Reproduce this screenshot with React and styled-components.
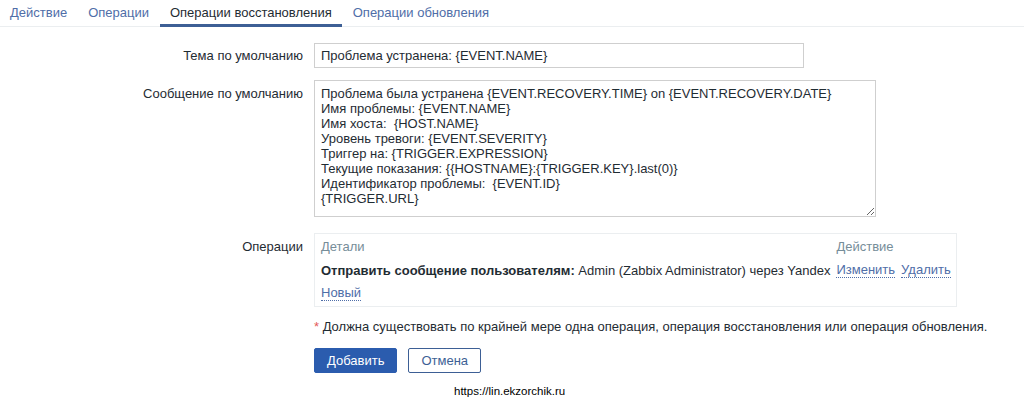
import React, { useState } from "react";
import styled, { createGlobalStyle } from "styled-components";

const GlobalStyle = createGlobalStyle`
  body {
    margin: 0;
    background: #ffffff;
    font-family: "Liberation Sans", Arial, sans-serif;
    font-size: 13px;
    color: #1f2c33;
  }
`;

const Page = styled.div`
  width: 1024px;
  height: 399px;
  overflow: hidden;
`;

const TabBar = styled.nav`
  display: flex;
  height: 26px;
  border-bottom: 1px solid #ebeef0;
`;

const Tab = styled.a`
  display: flex;
  align-items: center;
  padding: 0 10px;
  height: 24px;
  margin-bottom: -1px;
  color: ${(p) => (p.$active ? "#1f2c33" : "#4f6ea8")};
  border-bottom: 3px solid ${(p) => (p.$active ? "#3d5f95" : "transparent")};
  text-decoration: none;
  cursor: pointer;
  & + & {
    margin-left: 1px;
  }
`;

const Form = styled.div`
  display: grid;
  grid-template-columns: 303px 642px;
  column-gap: 11px;
  row-gap: 12px;
  padding-top: 16px;
`;

const Label = styled.label`
  text-align: right;
  padding-top: ${(p) => p.$top || 6}px;
  color: #1f2c33;
`;

const TextInput = styled.input`
  box-sizing: border-box;
  width: 490px;
  height: 25px;
  border: 1px solid #cfcfcf;
  padding: 0 6px;
  font: inherit;
  color: #1f2c33;
  outline: none;
`;

const TextArea = styled.textarea`
  box-sizing: border-box;
  display: block;
  width: 562px;
  height: 137px;
  border: 1px solid #cfcfcf;
  padding: 5px 6px;
  font: inherit;
  line-height: 15px;
  color: #1f2c33;
  outline: none;
  resize: both;
`;

const OpsBox = styled.div`
  box-sizing: border-box;
  width: 643px;
  height: 74px;
  margin-top: 4px;
  border: 1px solid #ebeef0;
  padding: 5px 6px 0 6px;
`;

const OpsTable = styled.div`
  display: grid;
  grid-template-columns: 1fr auto;
  column-gap: 6px;
  row-gap: 9px;
`;

const HeadCell = styled.div`
  color: #768d99;
`;

const Cell = styled.div`
  white-space: nowrap;
`;

const Actions = styled.div`
  display: flex;
  gap: 6px;
`;

const Link = styled.a`
  color: #4f6ea8;
  text-decoration: none;
  border-bottom: 1px dotted #4f6ea8;
  cursor: pointer;
  line-height: 14px;
`;

const NewLink = styled(Link)`
  display: inline-block;
  margin-top: 8px;
`;

const Note = styled.div`
  grid-column: 2;
  line-height: 15px;
  color: #1f2c33;
  white-space: nowrap;
`;

const Star = styled.span`
  color: #e45959;
`;

const ButtonRow = styled.div`
  grid-column: 2;
  display: flex;
  gap: 11px;
  margin-top: 2px;
`;

const Button = styled.button`
  box-sizing: border-box;
  height: 25px;
  padding: 0 ${(p) => (p.$primary ? 12 : 12)}px;
  font: inherit;
  border-radius: 2px;
  border: 1px solid ${(p) => (p.$primary ? "#2b5cae" : "#3d5f95")};
  background: ${(p) => (p.$primary ? "#2b5cae" : "#ffffff")};
  color: ${(p) => (p.$primary ? "#ffffff" : "#3d5f95")};
  cursor: pointer;
`;

const Footer = styled.div`
  padding-left: 454px;
  margin-top: 11px;
  font-size: 11.5px;
  line-height: 14px;
  color: #000000;
`;

const message = `Проблема была устранена {EVENT.RECOVERY.TIME} on {EVENT.RECOVERY.DATE}
Имя проблемы: {EVENT.NAME}
Имя хоста:  {HOST.NAME}
Уровень тревоги: {EVENT.SEVERITY}
Триггер на: {TRIGGER.EXPRESSION}
Текущие показания: {{HOSTNAME}:{TRIGGER.KEY}.last(0)}
Идентификатор проблемы:  {EVENT.ID}
{TRIGGER.URL}`;

const tabs = ["Действие", "Операции", "Операции восстановления", "Операции обновления"];

export default function App() {
  const [active, setActive] = useState(2);
  const [subject, setSubject] = useState("Проблема устранена: {EVENT.NAME}");
  const [body, setBody] = useState(message);

  return (
    <Page>
      <GlobalStyle />
      <TabBar>
        {tabs.map((t, i) => (
          <Tab key={t} $active={i === active} onClick={() => setActive(i)}>
            {t}
          </Tab>
        ))}
      </TabBar>
      <Form>
        <Label $top={5}>Тема по умолчанию</Label>
        <div>
          <TextInput value={subject} onChange={(e) => setSubject(e.target.value)} />
        </div>

        <Label $top={6}>Сообщение по умолчанию</Label>
        <div>
          <TextArea value={body} onChange={(e) => setBody(e.target.value)} spellCheck={false} />
        </div>

        <Label $top={10}>Операции</Label>
        <OpsBox>
          <OpsTable>
            <HeadCell>Детали</HeadCell>
            <HeadCell>Действие</HeadCell>
            <Cell>
              <b>Отправить сообщение пользователям:</b> Admin (Zabbix Administrator) через Yandex
            </Cell>
            <Actions>
              <Link>Изменить</Link>
              <Link>Удалить</Link>
            </Actions>
          </OpsTable>
          <NewLink>Новый</NewLink>
        </OpsBox>

        <Note>
          <Star>*</Star> Должна существовать по крайней мере одна операция, операция восстановления или операция обновления.
        </Note>
        <ButtonRow>
          <Button $primary>Добавить</Button>
          <Button>Отмена</Button>
        </ButtonRow>
      </Form>
      <Footer>https://lin.ekzorchik.ru</Footer>
    </Page>
  );
}
